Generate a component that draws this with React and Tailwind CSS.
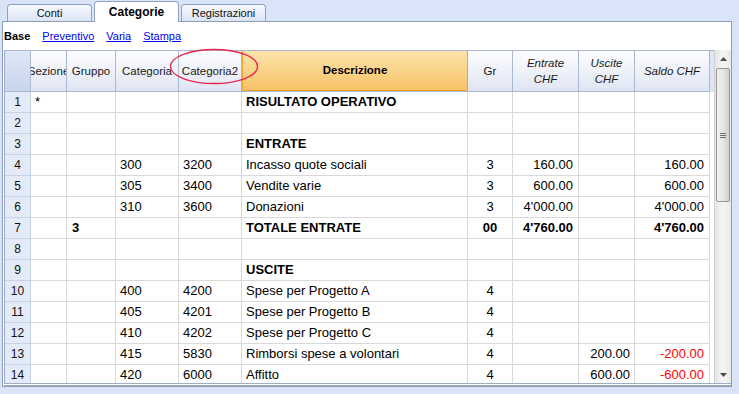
import React from "react";

const cols = [
  { key: "n", w: "w-[26px]" },
  { key: "sez", w: "w-[36px]" },
  { key: "gru", w: "w-[49px]" },
  { key: "cat", w: "w-[63px]" },
  { key: "cat2", w: "w-[63px]" },
  { key: "desc", w: "w-[226px]" },
  { key: "gr", w: "w-[45px]" },
  { key: "ent", w: "w-[66px]" },
  { key: "usc", w: "w-[56px]" },
  { key: "saldo", w: "w-[75px]" },
];

const rows = [
  { n: 1, sez: "*", desc: "RISULTATO OPERATIVO", bd: true },
  { n: 2 },
  { n: 3, desc: "ENTRATE", bd: true },
  { n: 4, cat: "300", cat2: "3200", desc: "Incasso quote sociali", gr: "3", ent: "160.00", saldo: "160.00" },
  { n: 5, cat: "305", cat2: "3400", desc: "Vendite varie", gr: "3", ent: "600.00", saldo: "600.00" },
  { n: 6, cat: "310", cat2: "3600", desc: "Donazioni", gr: "3", ent: "4'000.00", saldo: "4'000.00" },
  { n: 7, gru: "3", desc: "TOTALE ENTRATE", gr: "00", ent: "4'760.00", saldo: "4'760.00", all: true },
  { n: 8 },
  { n: 9, desc: "USCITE", bd: true },
  { n: 10, cat: "400", cat2: "4200", desc: "Spese per Progetto A", gr: "4" },
  { n: 11, cat: "405", cat2: "4201", desc: "Spese per Progetto B", gr: "4" },
  { n: 12, cat: "410", cat2: "4202", desc: "Spese per Progetto C", gr: "4" },
  { n: 13, cat: "415", cat2: "5830", desc: "Rimborsi spese a volontari", gr: "4", usc: "200.00", saldo: "-200.00", red: true },
  { n: 14, cat: "420", cat2: "6000", desc: "Affitto", gr: "4", usc: "600.00", saldo: "-600.00", red: true },
];

function HeaderCell({ w, children, italic }) {
  return (
    <div
      className={`${w} h-full shrink-0 flex items-center justify-center overflow-hidden whitespace-nowrap border-r border-[#a9b9d1] bg-gradient-to-b from-[#fdfdff] to-[#dfe5f2] text-[11.5px] leading-[16px] text-[#1a1a1a] text-center ${italic ? "italic" : ""}`}
    >
      <div>{children}</div>
    </div>
  );
}

function Row({ r }) {
  const b = r.all ? "font-bold" : "";
  const cell = "h-full shrink-0 flex items-center overflow-hidden whitespace-nowrap border-r border-b border-[#d9d9d9]";
  return (
    <div className="flex h-[21px] text-[13px] text-black">
      <div className={`w-[26px] h-full shrink-0 flex items-center justify-center bg-[#e3ebf7] border-b border-r border-[#c6d2e6] text-[12px] text-[#111]`}>
        {r.n}
      </div>
      <div className={`w-[36px] ${cell} pl-[4px] ${b}`}>{r.sez}</div>
      <div className={`w-[49px] ${cell} pl-[5px] ${b}`}>{r.gru}</div>
      <div className={`w-[63px] ${cell} pl-[4px]`}>{r.cat}</div>
      <div className={`w-[63px] ${cell} pl-[4px]`}>{r.cat2}</div>
      <div className={`w-[226px] ${cell} pl-[4px] ${r.bd || r.all ? "font-bold" : ""}`}>{r.desc}</div>
      <div className={`w-[45px] ${cell} justify-center ${b}`}>{r.gr}</div>
      <div className={`w-[66px] ${cell} justify-end pr-[5px] ${b}`}>{r.ent}</div>
      <div className={`w-[56px] ${cell} justify-end pr-[4px]`}>{r.usc}</div>
      <div className={`w-[75px] ${cell} justify-end pr-[5px] ${b} ${r.red ? "text-[#ff0000]" : ""}`}>{r.saldo}</div>
    </div>
  );
}

export default function App() {
  return (
    <div
      className="w-[739px] h-[394px] bg-[#d9e4f8] overflow-hidden relative"
      style={{ fontFamily: '"Liberation Sans", Arial, sans-serif' }}
    >
      {/* Tabs */}
      <div className="h-[21px] flex items-end pl-[7px] gap-[2px] relative z-10">
        <div className="w-[85px] h-[17px] flex items-center justify-center rounded-t-[4px] border border-b-0 border-[#8fa2c2] bg-gradient-to-b from-[#f7f9fe] to-[#dbe4f4] text-[11px] text-[#111]">
          Conti
        </div>
        <div className="w-[85px] h-[21px] -mb-px flex items-center justify-center rounded-t-[4px] border border-b-0 border-[#8fa2c2] bg-white text-[12px] font-bold text-black">
          Categorie
        </div>
        <div className="w-[85px] h-[17px] flex items-center justify-center rounded-t-[4px] border border-b-0 border-[#8fa2c2] bg-gradient-to-b from-[#f7f9fe] to-[#dbe4f4] text-[11px] text-[#111]">
          Registrazioni
        </div>
      </div>

      {/* Panel */}
      <div className="ml-[2px] w-[730px] h-[366px] border border-[#8e9db5] bg-white flex flex-col">
        {/* Toolbar */}
        <div className="h-[28px] shrink-0 flex items-center pl-[1px] gap-[12px] text-[11px]">
          <span className="font-bold text-black">Base</span>
          <span className="text-[#0000ee] underline">Preventivo</span>
          <span className="text-[#0000ee] underline">Varia</span>
          <span className="text-[#0000ee] underline">Stampa</span>
        </div>

        {/* Table area */}
        <div className="flex-1 ml-[1px] flex overflow-hidden border-b-[3px] border-double border-[#a0aec4] relative">
          <div className="w-[706px] shrink-0 border-l border-[#9aaac4] flex flex-col">
            {/* Header */}
            <div className="flex h-[42px] shrink-0 border-t border-b border-[#a9b9d1]">
              <div className="w-[26px] h-full shrink-0 bg-gradient-to-b from-[#dfe7f6] to-[#c8d5ec] border-r border-[#a9b9d1]" />
              <HeaderCell w="w-[36px]">Sezione</HeaderCell>
              <HeaderCell w="w-[49px]">Gruppo</HeaderCell>
              <HeaderCell w="w-[63px]">Categoria</HeaderCell>
              <HeaderCell w="w-[63px]">Categoria2</HeaderCell>
              <div className="w-[226px] h-full shrink-0 flex items-center justify-center border-x border-b border-[#f0a232] bg-gradient-to-b from-[#fde4aa] to-[#f6c264] text-[11.5px] font-bold text-black -mb-px">
                Descrizione
              </div>
              <HeaderCell w="w-[45px]">Gr</HeaderCell>
              <HeaderCell w="w-[66px]" italic>
                Entrate
                <br />
                CHF
              </HeaderCell>
              <HeaderCell w="w-[56px]" italic>
                Uscite
                <br />
                CHF
              </HeaderCell>
              <HeaderCell w="w-[75px]" italic>Saldo CHF</HeaderCell>
            </div>
            {/* Body */}
            <div className="flex flex-col">
              {rows.map((r) => (
                <Row key={r.n} r={r} />
              ))}
            </div>
          </div>

          {/* header filler */}
          <div className="w-[4px] shrink-0 flex flex-col">
            <div className="h-[42px] border-t border-[#a9b9d1] bg-[#dde6f6]" />
          </div>

          {/* Scrollbar */}
          <div className="w-[17px] shrink-0 flex flex-col border-l border-[#d0d0d0] bg-gradient-to-r from-[#e6e6e6] via-[#f6f6f6] to-[#e9e9e9]">
            <div className="h-[18px] shrink-0 flex items-center justify-center">
              <svg width="7" height="4" viewBox="0 0 7 4">
                <path d="M3.5 0 L7 4 L0 4 Z" fill="#4d4d4d" />
              </svg>
            </div>
            <div className="h-[134px] shrink-0 mx-[1px] rounded-[2px] border border-[#979797] bg-gradient-to-r from-[#f2f2f2] via-[#e6e6e6] to-[#cfcfcf] flex items-center justify-center">
              <div className="flex flex-col gap-[1px]">
                <div className="w-[6px] h-px bg-[#6e6e6e]" />
                <div className="w-[6px] h-px bg-[#6e6e6e]" />
                <div className="w-[6px] h-px bg-[#6e6e6e]" />
              </div>
            </div>
            <div className="flex-1" />
            <div className="h-[16px] shrink-0 flex items-center justify-center">
              <svg width="7" height="4" viewBox="0 0 7 4">
                <path d="M0 0 L7 0 L3.5 4 Z" fill="#4d4d4d" />
              </svg>
            </div>
          </div>
        </div>
      </div>

      {/* Annotation ellipse */}
      <svg className="absolute left-[169px] top-[48px] pointer-events-none" width="90" height="37" viewBox="0 0 90 37">
        <ellipse cx="45" cy="18.5" rx="43.5" ry="17" fill="none" stroke="#e8264e" strokeWidth="1.3" />
      </svg>
    </div>
  );
}
